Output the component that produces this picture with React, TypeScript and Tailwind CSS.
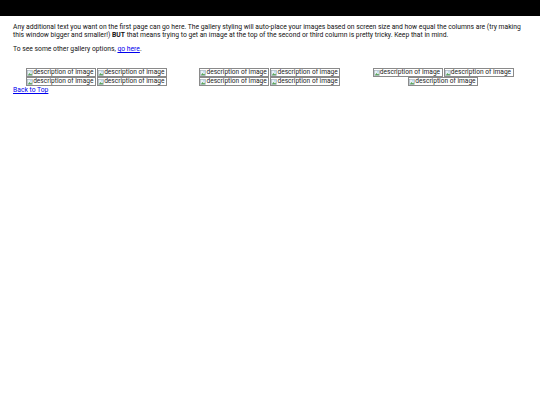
import React from "react";

function BrokenImg() {
  return (
    <span className="flex items-center h-[9px] w-[70px] border border-[#8a8a8a] overflow-hidden whitespace-nowrap text-[6.6px] leading-[7px] text-[#222]">
      <svg width="6" height="6" viewBox="0 0 6 6" className="shrink-0">
        <rect x="0.5" y="0.5" width="5" height="5" fill="#e8f0f6" stroke="#9aa7b3" strokeWidth="0.6" />
        <path d="M0.8 5.2 L2.5 3 L3.6 4.2 L4.4 3.4 L5.2 5.2 Z" fill="#5aa55a" />
        <circle cx="4" cy="1.8" r="0.6" fill="#6ab0e0" />
      </svg>
      <span>description of image</span>
    </span>
  );
}

function Column({ count }: { count: number }) {
  return (
    <div className="flex flex-wrap justify-center content-start gap-x-[1px] px-[16px]">
      {Array.from({ length: count }).map((_, i) => (
        <BrokenImg key={i} />
      ))}
    </div>
  );
}

export default function App() {
  return (
    <div className="min-h-[405px] bg-white text-[#111]" style={{ fontFamily: "Roboto, 'Liberation Sans', Arial, sans-serif" }}>
      <div className="h-[16px] bg-black" />
      <div className="px-[13px] text-[6.75px] leading-[8px]">
        <p className="mt-[7px]">
          Any additional text you want on the first page can go here. The gallery styling will auto-place your images based on screen size and how equal the columns are (try making this window bigger and smaller!) <b>BUT</b> that means trying to get an image at the top of the second or third column is pretty tricky. Keep that in mind.
        </p>
        <p className="mt-[6px]">
          To see some other gallery options, <a href="#" className="text-[#0000ee] underline">go here</a>.
        </p>
        <div className="grid grid-cols-3 mt-[15px] -mx-[3px]">
          <Column count={4} />
          <Column count={4} />
          <Column count={3} />
        </div>
        <a href="#" className="block text-[#0000ee] underline">Back to Top</a>
      </div>
    </div>
  );
}
